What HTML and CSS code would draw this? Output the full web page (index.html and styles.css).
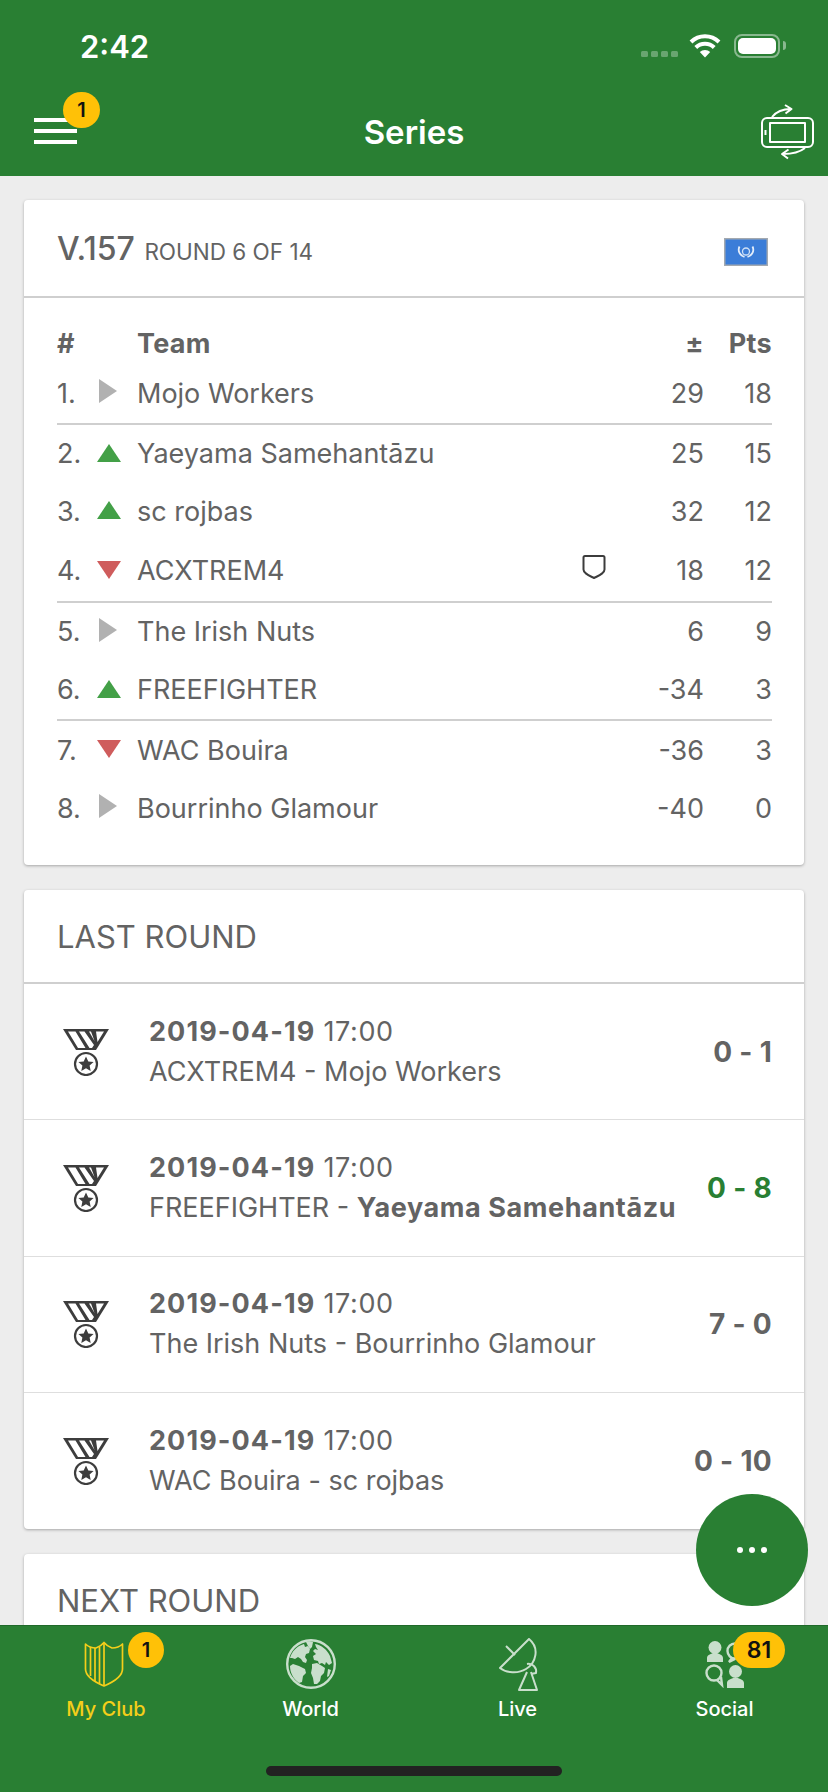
FILE: index.html
```html
<!DOCTYPE html>
<html lang="en">
<head>
<meta charset="utf-8">
<title>Series</title>
<link rel="stylesheet" href="styles.css">
</head>
<body>
<div class="phone">
  <header class="topbar">
    <div class="status">
      <span class="clock">2:42</span>
      <div class="status-icons">
        <span class="signal"><i></i><i></i><i></i><i></i></span>
        <svg class="wifi" viewBox="0 0 32 24"><path d="M16 23.500 10.800 18a7.500 7.500 0 0 1 10.400 0Z" fill="#fff"/><path d="M6.800 13.500a13 13 0 0 1 18.400 0M2 8a20 20 0 0 1 28 0" fill="none" stroke="#fff" stroke-width="4"/></svg>
        <span class="battery"><span class="battery-fill"></span></span>
      </div>
    </div>
    <div class="navbar">
      <div class="menu"><span></span><span></span><span></span><b class="badge menu-badge">1</b></div>
      <h1 class="title">Series</h1>
      <svg class="rotate" viewBox="0 0 60 60" fill="none" stroke="#fff" stroke-width="2" stroke-linejoin="round"><rect x="4" y="16" width="51" height="29" rx="5"/><rect x="12" y="21" width="35" height="19"/><path d="M7.500 28v5"/><path d="M14 15c4-5 11-8 19-8M27 3l6.500 4-6 4.500"/><path d="M47 46c-5 4-13 6-22 6M30.500 47.500 24 52l6 4.500"/></svg>
    </div>
  </header>

  <main class="content">
    <section class="card league">
      <div class="card-head">
        <h2 class="league-name">V.157 <small>ROUND 6 OF 14</small></h2>
        <svg class="flag" viewBox="0 0 44 28"><rect x=".75" y=".75" width="42.500" height="26.500" fill="#3B7DD8" stroke="#A3A9B0" stroke-width="1.500"/><circle cx="22" cy="13.500" r="3.500" fill="none" stroke="#CFE0F6" stroke-width="1.300"/><path d="M15.500 8.500c-2 4 0 9 5 10.500M28.500 8.500c2 4 0 9-5 10.500" fill="none" stroke="#E3EDFA" stroke-width="1.800"/></svg>
      </div>
      <div class="table">
        <div class="row head"><span class="pos">#</span><span class="trend"></span><span class="team">Team</span><span class="diff">±</span><span class="pts">Pts</span></div>
        <div class="row line"><span class="pos">1.</span><span class="trend"><i class="tri same"></i></span><span class="team">Mojo Workers</span><span class="diff">29</span><span class="pts">18</span></div>
        <div class="row short"><span class="pos">2.</span><span class="trend"><i class="tri up"></i></span><span class="team">Yaeyama Samehantāzu</span><span class="diff">25</span><span class="pts">15</span></div>
        <div class="row"><span class="pos">3.</span><span class="trend"><i class="tri up"></i></span><span class="team">sc rojbas</span><span class="diff">32</span><span class="pts">12</span></div>
        <div class="row line tall"><span class="pos">4.</span><span class="trend"><i class="tri down"></i></span><span class="team">ACXTREM4</span><svg class="mini-shield" viewBox="0 0 24 24"><path d="M1.500 2.500q0-1.500 1.500-1.500h18q1.500 0 1.500 1.500v12c0 4-5.500 6-10.500 8.500C7 20.500 1.500 18.500 1.500 14.500Z" fill="none" stroke="#3c3c3c" stroke-width="2" stroke-linejoin="round"/></svg><span class="diff">18</span><span class="pts">12</span></div>
        <div class="row short"><span class="pos">5.</span><span class="trend"><i class="tri same"></i></span><span class="team">The Irish Nuts</span><span class="diff">6</span><span class="pts">9</span></div>
        <div class="row line"><span class="pos">6.</span><span class="trend"><i class="tri up"></i></span><span class="team">FREEFIGHTER</span><span class="diff">-34</span><span class="pts">3</span></div>
        <div class="row"><span class="pos">7.</span><span class="trend"><i class="tri down"></i></span><span class="team">WAC Bouira</span><span class="diff">-36</span><span class="pts">3</span></div>
        <div class="row"><span class="pos">8.</span><span class="trend"><i class="tri same"></i></span><span class="team">Bourrinho Glamour</span><span class="diff">-40</span><span class="pts">0</span></div>
      </div>
    </section>

    <section class="card">
      <h2 class="section-head">LAST ROUND</h2>
      <div class="match">
        <svg class="medal" viewBox="0 0 46 48"><use href="#medal-shape"/></svg>
        <div class="match-text"><div class="when"><b>2019-04-19</b> 17:00</div><div class="teams">ACXTREM4 - Mojo Workers</div></div>
        <b class="score">0 - 1</b>
      </div>
      <div class="match">
        <svg class="medal" viewBox="0 0 46 48"><use href="#medal-shape"/></svg>
        <div class="match-text"><div class="when"><b>2019-04-19</b> 17:00</div><div class="teams">FREEFIGHTER - <b>Yaeyama Samehantāzu</b></div></div>
        <b class="score win">0 - 8</b>
      </div>
      <div class="match">
        <svg class="medal" viewBox="0 0 46 48"><use href="#medal-shape"/></svg>
        <div class="match-text"><div class="when"><b>2019-04-19</b> 17:00</div><div class="teams">The Irish Nuts - Bourrinho Glamour</div></div>
        <b class="score">7 - 0</b>
      </div>
      <div class="match">
        <svg class="medal" viewBox="0 0 46 48"><use href="#medal-shape"/></svg>
        <div class="match-text"><div class="when"><b>2019-04-19</b> 17:00</div><div class="teams">WAC Bouira - sc rojbas</div></div>
        <b class="score">0 - 10</b>
      </div>
    </section>

    <section class="card">
      <h2 class="section-head">NEXT ROUND</h2>
    </section>
  </main>

  <button class="fab" aria-label="More"><i></i><i></i><i></i></button>

  <nav class="tabbar">
    <div class="tab active">
      <svg class="tab-icon club-icon" viewBox="0 0 40 46" fill="none" stroke="#F4CE1A" stroke-width="1.700" stroke-linejoin="round"><path d="M1.500 3c3 3 7 4 10.500 4 3-1 6-3 8-5.500 2 2.500 5 4.500 8 5.500 3.500 0 7.500-1 10.500-4v25c0 8-9 13-18.500 17C10.500 41 1.500 36 1.500 28Z"/><path d="M6.500 6v29M11 7v33M15.500 5.500v37M20 2v43"/></svg>
      <span>My Club</span>
      <b class="badge tab-badge club-badge">1</b>
    </div>
    <div class="tab">
      <svg class="tab-icon globe-icon" viewBox="0 0 50 50"><circle cx="25" cy="25" r="23.800" fill="none" stroke="#C9DFCC" stroke-width="2.400"/><g fill="#C9DFCC"><path d="M4 19C6 12 11 7 18 5l1 3 3-1 2 3-1 4-3 1-1 3 2 3-1 3-3-1-2-3-3-2-3 2-3-1Z"/><path d="M20 3c2-1 5-1 7 0l-1 5-2 2-2-3Z"/><path d="M29 5c7 1 12 6 15 12l2 7-3 2-3-3-1 3-3-2-3 1-1-3-4-1-1-4 3-2-3-3 2-2 3 1-2-3Z"/><path d="M26 25l5-1 5 3 3 2-1 5-3 3-1 5-3 3h-3l-1-6-2-5 1-5Z"/><path d="M7 25l6 2 6 3 1 4-3 3-1 6-3 1C7 40 4 33 4 27Z"/><path d="M42 30l3 1-2 6-2 1Z"/></g></svg>
      <span>World</span>
    </div>
    <div class="tab">
      <svg class="tab-icon live-icon" viewBox="0 0 40 53" fill="none" stroke="#C9DFCC" stroke-width="2" stroke-linejoin="round"><path d="M31 1 2 30c6 5 18 6 26 1C38 25 42 10 31 1Z"/><path d="M8 8l9 9"/><path d="M29 26c6-1 10 4 9 9l-5 1"/><path d="M29 34 21 52h18l-6-18"/></svg>
      <span>Live</span>
    </div>
    <div class="tab">
      <svg class="tab-icon social-icon" viewBox="0 0 40 48"><g fill="#C9DFCC"><circle cx="10" cy="7.500" r="6.500"/><path d="M2 22v-4c0-3 4-4 6-5h4c2 1 6 2 6 5v4Z"/><circle cx="30.500" cy="31.500" r="6.500"/><path d="M22 48v-5c0-3 4-4 6-5h5c2 1 6 2 6 5v5Z"/></g><g fill="none" stroke="#C9DFCC" stroke-width="2.400"><circle cx="30" cy="11" r="7.500"/><circle cx="9" cy="33" r="7.500"/><path d="M12 40l5 5-1-8M27 18l-3 4 6-3"/></g></svg>
      <span>Social</span>
      <b class="badge tab-badge social-badge">81</b>
    </div>
    <span class="home-bar"></span>
  </nav>

  <svg class="defs" width="0" height="0"><defs>
    <g id="medal-shape">
      <path d="M0 1h46L33 22H13Z" fill="#3d3d3d"/>
      <path d="M5 3.500h7.500l10 16.500h-7.500ZM16 3.500h5.500L31 17l-2 3h-2.500ZM26 3.500h2l3.500 9.500ZM33 3.500h8L34.500 14Z" fill="#fff"/>
      <circle cx="23" cy="36" r="11" fill="#fff" stroke="#3d3d3d" stroke-width="2.200"/>
      <path d="M23 28.500l2.300 4.900 5.300.6-4 3.600 1.100 5.300-4.700-2.700-4.700 2.700 1.100-5.300-4-3.600 5.300-.6Z" fill="#3d3d3d"/>
    </g>
  </defs></svg>
</div>
</body>
</html>
```

FILE: styles.css
```css
* { box-sizing: border-box; }
html, body { margin: 0; padding: 0; }
body { background: #EDEDED; font-family: Inter, Roboto, sans-serif; color: #636363; }
i { display: block; font-style: normal; }

.phone { position: relative; width: 828px; height: 1792px; overflow: hidden; display: flex; flex-direction: column; background: #EDEDED; }

.topbar { height: 176px; flex: none; background: #297F33; color: #fff; display: flex; flex-direction: column; }
.status { height: 88px; display: flex; justify-content: space-between; align-items: center; padding: 4px 41px 0 80px; }
.clock { font-size: 31px; font-weight: 600; }
.status-icons { display: flex; align-items: center; }
.signal { display: flex; gap: 3px; margin-top: 15px; margin-right: 11px; }
.signal i { width: 7px; height: 6px; border-radius: 1.500px; background: rgba(255,255,255,.3); }
.wifi { width: 32px; height: 24px; margin-right: 13px; }
.battery { position: relative; width: 46px; height: 24px; border: 2px solid rgba(255,255,255,.45); border-radius: 8px; padding: 2px; display: block; margin-right: 7px; }
.battery::after { content: ""; position: absolute; right: -8px; top: 5px; width: 3px; height: 9px; border-radius: 0 3px 3px 0; background: rgba(255,255,255,.45); }
.battery-fill { display: block; height: 100%; background: #fff; border-radius: 5px; }
.navbar { height: 88px; display: flex; align-items: center; justify-content: space-between; padding: 0 10px 0 34px; position: relative; }
.menu { position: relative; width: 43px; display: flex; flex-direction: column; gap: 7.500px; margin-top: -2px; }
.menu span { display: block; height: 3.500px; background: #fff; }
.menu-badge { position: absolute; left: 29px; top: -26px; width: 37px; height: 36px; }
.title { position: absolute; left: 0; right: 0; text-align: center; margin: 0; font-size: 33px; font-weight: 600; color: #fff; }
.rotate { width: 60px; height: 60px; }

.badge { background: #FFC107; color: #111; border-radius: 18px; font-weight: 600; font-size: 20px; display: flex; align-items: center; justify-content: center; }

.content { flex: 1; padding: 24px 24px 0; display: flex; flex-direction: column; gap: 25px; min-height: 0; overflow: hidden; }
.card { background: #fff; border-radius: 4px; box-shadow: 0 1px 3px rgba(0,0,0,.3); flex: none; }
.card-head { height: 98px; display: flex; align-items: center; justify-content: space-between; padding: 0 36px 0 33px; border-bottom: 2px solid #CFCFCF; }
.league-name { margin: 0; font-size: 32px; font-weight: 500; }
.league-name small { font-size: 22.500px; font-weight: 400; margin-left: 1px; }
.flag { width: 44px; height: 28px; margin-top: 7px; }

.table { padding: 22px 32px 28px 33px; }
.row { display: flex; align-items: center; height: 58px; font-size: 27px; }
.row.head { height: 43px; padding-top: 4px; font-weight: 700; letter-spacing: .3px; }
.row.line { height: 62px; border-bottom: 2px solid #CFCFCF; }
.row.line.tall { height: 63px; }
.row.short { height: 57px; }
.row:nth-child(7) { height: 61px; }
.pos { width: 35px; }
.trend { width: 45px; display: flex; justify-content: flex-start; }
.team { flex: 1; }
.diff { width: 60px; text-align: right; }
.pts { width: 68px; text-align: right; }
.mini-shield { width: 24px; height: 24px; margin-right: 38px; margin-bottom: 8px; }
.tri { width: 0; height: 0; border-style: solid; }
.tri.same { border-width: 12px 0 12px 18px; border-color: transparent transparent transparent #B1B1B1; margin-left: 7px; margin-bottom: 4px; }
.tri.up { border-width: 0 12px 18px; border-color: transparent transparent #43A047; margin-left: 5px; margin-bottom: 2px; }
.tri.down { border-width: 18px 12px 0; border-color: #CF5C5C transparent transparent; margin-left: 5px; margin-bottom: 2px; }

.section-head { margin: 0; height: 94px; line-height: 94px; padding-left: 33px; font-size: 31px; font-weight: 400; border-bottom: 2px solid #CFCFCF; }
.match { height: 136.250px; padding: 0 32px 0 39px; display: flex; align-items: center; border-bottom: 1px solid #DEDEDE; }
.match:last-child { border-bottom: 0; }
.medal { width: 46px; height: 48px; margin-right: 40px; flex: none; }
.match-text { flex: 1; font-size: 27px; white-space: nowrap; }
.when { line-height: 40px; letter-spacing: .6px; }
.when b { letter-spacing: 1.100px; }
.teams { line-height: 40px; }
.teams b { letter-spacing: .6px; }
.score { font-size: 28px; letter-spacing: .3px; }
.score.win { color: #297F33; }

.fab { position: absolute; left: 696px; top: 1494px; width: 112px; height: 112px; border-radius: 50%; border: 0; background: #297F33; display: flex; align-items: center; justify-content: center; gap: 6px; padding: 0; }
.fab i { width: 6px; height: 6px; background: #fff; border-radius: 50%; }

.tabbar { position: absolute; left: 0; right: 0; top: 1625px; height: 167px; background: #297F33; display: grid; grid-template-columns: repeat(4, 207px); align-items: start; border-top: 1px solid #20692A; }
.tab { position: relative; display: flex; flex-direction: column; align-items: center; color: #fff; font-size: 20px; font-weight: 500; padding-top: 12px; }
.tab span { margin-top: 7px; }
.tab.active { color: #F4CE1A; }
.tab.active span { margin-left: 5px; }
.tab-icon { height: 52px; }
.club-icon { width: 40px; height: 46px; margin: 3px 0 3px; }
.globe-icon { width: 50px; height: 50px; margin: 1px 0; }
.live-icon { width: 40px; height: 53px; margin-bottom: -1px; }
.social-icon { width: 40px; height: 48px; margin: 2px 0; }
.tab-badge { position: absolute; top: 6px; height: 36px; }
.club-badge { left: 128px; width: 36px; }
.social-badge { left: 112px; width: 52px; font-size: 23px; }
.home-bar { position: absolute; left: 266px; top: 140px; width: 296px; height: 10px; background: #222; border-radius: 5px; }
.defs { position: absolute; }
```
